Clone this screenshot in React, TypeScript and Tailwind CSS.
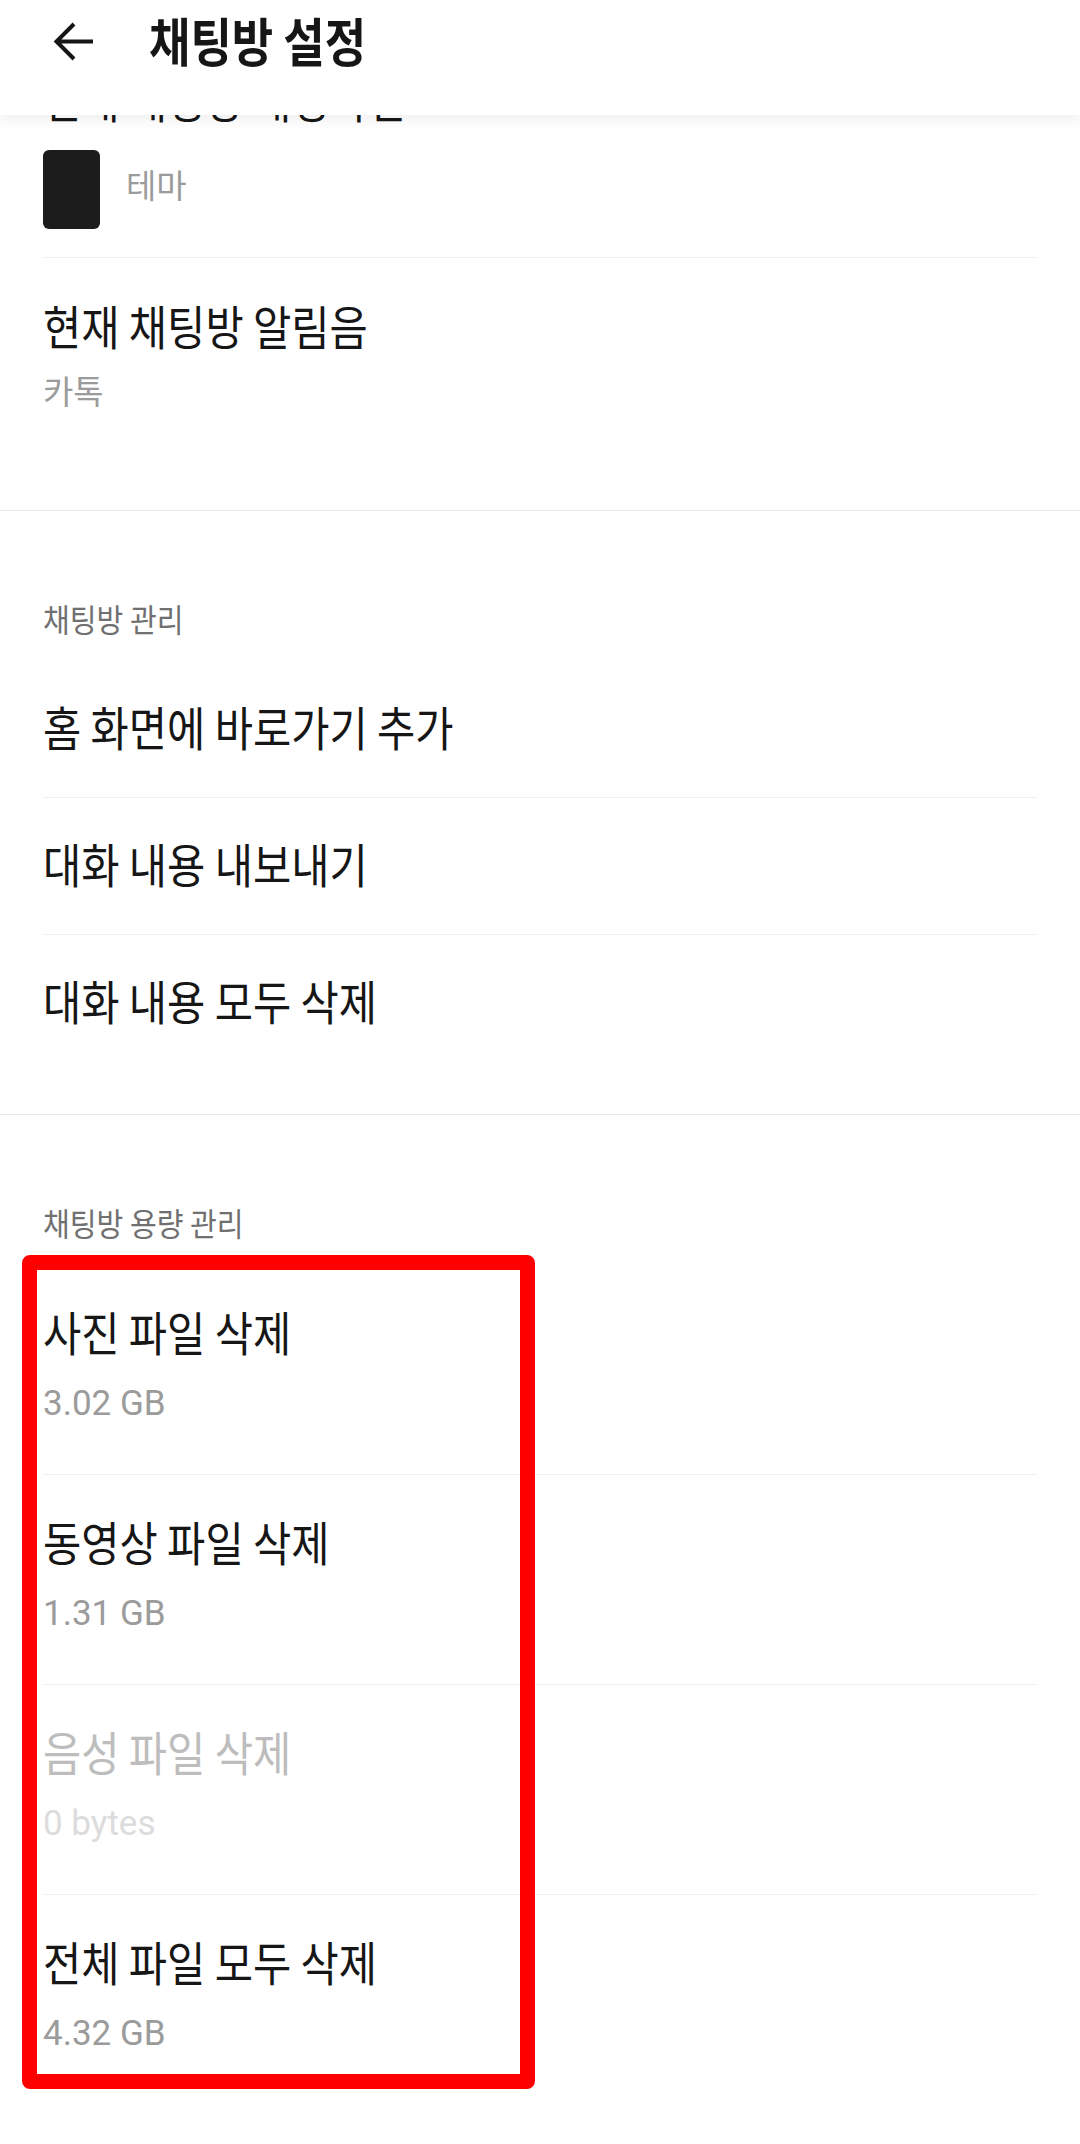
import React from "react";

const KR = "font-['Noto_Sans_CJK_KR','Noto_Sans_CJK_SC',sans-serif]";
const TITLE =
  "block text-[47px] leading-[47px] scale-x-[0.885] origin-left whitespace-nowrap";
const SUB_LATIN =
  "block font-['Roboto','Noto_Sans_CJK_KR',sans-serif] text-[35px] leading-[35px] whitespace-nowrap";
const SUB_KR = "block text-[33px] leading-[33px] whitespace-nowrap";
const SECTION_HEAD =
  "block text-[32px] leading-[32px] scale-x-[0.91] origin-left whitespace-nowrap text-[#707070]";

function SingleRow({ title, last }: { title: string; last?: boolean }) {
  return (
    <div
      className={
        "mx-[43px] h-[137px] box-border pt-[41px] " +
        (last ? "" : "border-b border-[#f0f0f0]")
      }
    >
      <span className={TITLE + " text-[#161616]"}>{title}</span>
    </div>
  );
}

function StorageRow({
  title,
  size,
  disabled,
  last,
}: {
  title: string;
  size: string;
  disabled?: boolean;
  last?: boolean;
}) {
  return (
    <div
      className={
        "mx-[43px] h-[210px] box-border pt-[42px] " +
        (last ? "" : "border-b border-[#f0f0f0]")
      }
    >
      <span className={TITLE + (disabled ? " text-[#bdbdbd]" : " text-[#161616]")}>
        {title}
      </span>
      <span
        className={
          SUB_LATIN +
          " mt-[32px]" +
          (disabled ? " text-[#dcdcdc]" : " text-[#9b9b9b]")
        }
      >
        {size}
      </span>
    </div>
  );
}

function SectionHeader({ label }: { label: string }) {
  return (
    <div className="mx-[43px] h-[150px] box-border pt-[91px]">
      <span className={SECTION_HEAD}>{label}</span>
    </div>
  );
}

export default function App() {
  return (
    <div
      className={
        "relative w-[1080px] h-[2144px] overflow-hidden bg-white text-[#161616] " + KR
      }
    >
      {/* Scrolled content */}
      <div className="pt-[31px]">
        {/* Section 1 */}
        <div className="pb-[42px]">
          <div className="mx-[43px] h-[227px] box-border border-b border-[#f0f0f0] pt-[43px]">
            <span className={TITLE}>현재 채팅방 배경화면</span>
            <div className="mt-[29px] flex items-center gap-[26px]">
              <div className="w-[57px] h-[79px] rounded-[6px] bg-[#1c1c1c]" />
              <span className={SUB_KR + " -mt-[10px] text-[#9b9b9b]"}>테마</span>
            </div>
          </div>
          <div className="mx-[43px] h-[210px] box-border pt-[43px]">
            <span className={TITLE}>현재 채팅방 알림음</span>
            <span className={SUB_KR + " mt-[26px] text-[#9b9b9b]"}>카톡</span>
          </div>
        </div>
        <div className="h-px bg-[#e9e9e9]" />

        {/* Section 2 */}
        <div className="pb-[42px]">
          <SectionHeader label="채팅방 관리" />
          <SingleRow title="홈 화면에 바로가기 추가" />
          <SingleRow title="대화 내용 내보내기" />
          <SingleRow title="대화 내용 모두 삭제" last />
        </div>
        <div className="h-px bg-[#e9e9e9]" />

        {/* Section 3 */}
        <div className="pb-[42px]">
          <SectionHeader label="채팅방 용량 관리" />
          <StorageRow title="사진 파일 삭제" size="3.02 GB" />
          <StorageRow title="동영상 파일 삭제" size="1.31 GB" />
          <StorageRow title="음성 파일 삭제" size="0 bytes" disabled />
          <StorageRow title="전체 파일 모두 삭제" size="4.32 GB" last />
        </div>
      </div>

      {/* Fixed header overlaying content */}
      <div className="absolute top-0 left-0 right-0 h-[115px] bg-white shadow-[0_4px_14px_rgba(0,0,0,0.07)] z-10">
        <div className="h-[80px] flex items-center pl-[53px]">
          <svg width="41" height="41" viewBox="0 0 41 41" fill="none" className="mt-[2px]">
            <path
              d="M40 20.5 H4 M21 3 L3.5 20.5 L21 38"
              stroke="#161616"
              strokeWidth="4"
              strokeLinecap="butt"
              strokeLinejoin="miter"
            />
          </svg>
          <span className="ml-[55px] block text-[52px] leading-[52px] font-bold scale-x-[0.865] origin-left whitespace-nowrap text-[#161616]">
            채팅방 설정
          </span>
        </div>
      </div>

      {/* Red highlight annotation */}
      <div className="absolute left-[22px] top-[1255px] w-[513px] h-[834px] box-border border-[15px] border-[#ff0000] rounded-[8px] z-20 pointer-events-none" />
    </div>
  );
}
